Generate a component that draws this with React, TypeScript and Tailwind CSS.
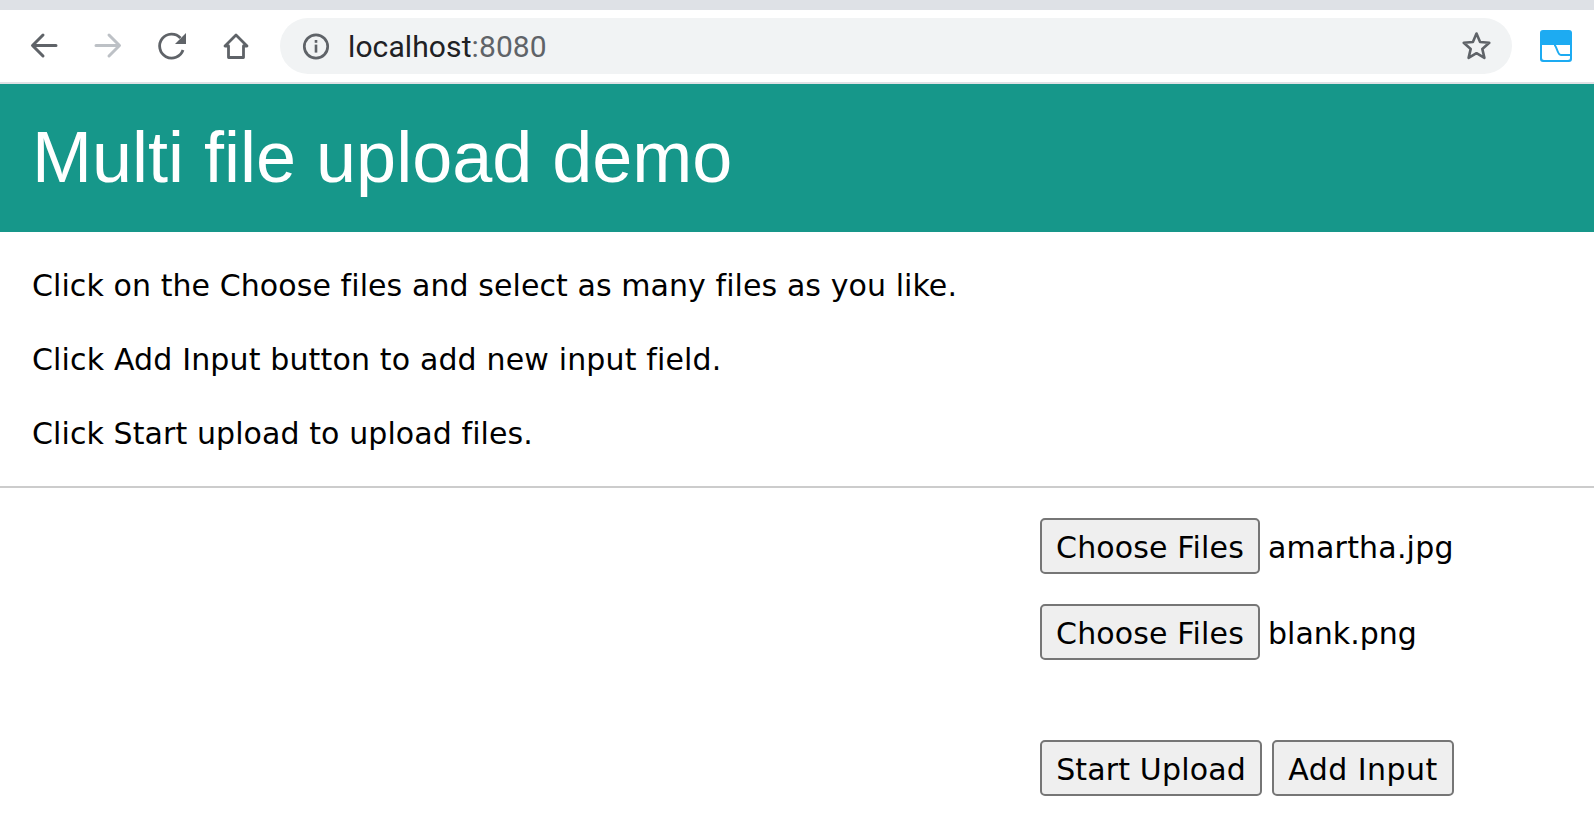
function BrowserBar() {
  return (
    <div className="border-b-2 border-[#dfe1e5] bg-white">
      <div className="h-[10px] bg-[#dee1e6]" />
      <div className="flex h-[72px] items-center gap-[32px] pl-[28px] pr-[22px]">
        {/* back */}
        <svg viewBox="0 0 32 32" className="h-[32px] w-[32px] fill-none stroke-[#5f6368] stroke-[3]" strokeLinecap="round" strokeLinejoin="round">
          <path d="M28 15.5H5M15 5 4.5 15.5 15 26" />
        </svg>
        {/* forward */}
        <svg viewBox="0 0 32 32" className="h-[32px] w-[32px] fill-none stroke-[#bdc1c6] stroke-[3]" strokeLinecap="round" strokeLinejoin="round">
          <path d="M4 15.5h23M17 5l10.5 10.5L17 26" />
        </svg>
        {/* reload */}
        <svg viewBox="0 0 32 32" className="h-[32px] w-[32px]">
          <path d="M24.5 8A12 12 0 1 0 27 20" fill="none" stroke="#5f6368" strokeWidth="2.8" />
          <path d="M30 3v11H19z" fill="#5f6368" />
        </svg>
        {/* home */}
        <svg viewBox="0 0 32 32" className="h-[32px] w-[32px] fill-none stroke-[#5f6368] stroke-[2.8]" strokeLinejoin="round">
          <path d="M16 5 5 16h3.5v11.5h15V16H27z" />
        </svg>
        <div className="-ml-[4px] flex h-[56px] flex-1 items-center rounded-full bg-[#f1f3f4] pl-[20px] pr-[20px]">
          <svg viewBox="0 0 32 32" className="h-[32px] w-[32px]">
            <circle cx="16" cy="16.5" r="11.7" fill="none" stroke="#5f6368" strokeWidth="2.7" />
            <rect x="14.7" y="10" width="2.6" height="2.8" fill="#5f6368" />
            <rect x="14.7" y="14.6" width="2.6" height="8" fill="#5f6368" />
          </svg>
          <span className="ml-[16px] font-['Roboto',sans-serif] text-[30px] tracking-[0.1px] text-[#202124]">
            localhost<span className="text-[#5f6368]">:8080</span>
          </span>
          <svg viewBox="0 0 32 32" className="ml-auto h-[32px] w-[32px] fill-none stroke-[#5f6368] stroke-[2.6]" strokeLinejoin="round">
            <path d="M16.5 3.5 20.1 12l9.2.8-7 6.1 2.1 9-7.9-4.7-7.9 4.7 2.1-9-7-6.1 9.2-.8z" />
          </svg>
        </div>
        {/* extension */}
        <svg viewBox="0 0 32 32" className="-ml-[4px] h-[32px] w-[32px]">
          <rect width="32" height="32" rx="3" fill="#1dabf2" />
          <path d="M2 15h28v13a2 2 0 0 1-2 2H4a2 2 0 0 1-2-2z" fill="#fff" />
          <path d="M14 15c3 0 3 10 7 10h9" fill="none" stroke="#1dabf2" strokeWidth="2" />
        </svg>
      </div>
    </div>
  )
}

const btn =
  "h-[56px] rounded-[5px] border-2 border-[#767676] bg-[#efefef] pt-[2px] font-['DejaVu_Sans',sans-serif] text-[30px] text-black"

export default function App() {
  return (
    <div className="min-h-[840px] overflow-hidden bg-white font-['DejaVu_Sans',sans-serif] text-black">
      <BrowserBar />
      <div className="flex h-[148px] items-center bg-[#16978a] px-[32px]">
        <h1 className="-translate-y-[1px] font-['Liberation_Sans',sans-serif] text-[72px] leading-none text-white">
          Multi file upload demo
        </h1>
      </div>
      <div className="flex flex-col gap-[38px] px-[32px] pt-[36px] text-[30px] leading-[36px]">
        <p className="tracking-[0.08px]">Click on the Choose files and select as many files as you like.</p>
        <p className="tracking-[0.15px]">Click Add Input button to add new input field.</p>
        <p className="tracking-[0.09px]">Click Start upload to upload files.</p>
      </div>
      <hr className="mt-[34px] border-t-2 border-[#ccc]" />
      <div className="ml-[1040px] mt-[30px] flex flex-col">
        <div className="flex items-center">
          <button className={`${btn} w-[220px] tracking-[0.15px]`}>Choose Files</button>
          <span className="ml-[8px] translate-y-[1px] text-[30px] tracking-[0.2px]">amartha.jpg</span>
        </div>
        <div className="mt-[30px] flex items-center">
          <button className={`${btn} w-[220px] tracking-[0.15px]`}>Choose Files</button>
          <span className="ml-[8px] translate-y-[1px] text-[30px]">blank.png</span>
        </div>
        <div className="mt-[80px] flex gap-[10px]">
          <button className={`${btn} w-[222px] tracking-[0.15px]`}>Start Upload</button>
          <button className={`${btn} w-[182px] tracking-[0.45px]`}>Add Input</button>
        </div>
      </div>
    </div>
  )
}
